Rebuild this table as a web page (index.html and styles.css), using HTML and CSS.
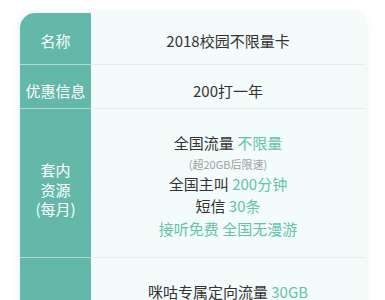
FILE: index.html
```html
<!DOCTYPE html>
<html lang="zh-CN">
<head>
<meta charset="utf-8">
<link rel="stylesheet" href="styles.css">
</head>
<body>
<div class="card">
  <div class="row r1">
    <div class="label">名称</div>
    <div class="value">2018校园不限量卡</div>
  </div>
  <div class="row r2">
    <div class="label">优惠信息</div>
    <div class="value">200打一年</div>
  </div>
  <div class="row r3">
    <div class="label multi">套内<br>资源<br>(每月)</div>
    <div class="value list">
      <div class="line l1">全国流量 <span class="hl">不限量</span></div>
      <div class="line note">(超20GB后限速)</div>
      <div class="line l3">全国主叫 <span class="hl">200分钟</span></div>
      <div class="line l4">短信 <span class="hl">30条</span></div>
      <div class="line l5 hl">接听免费 全国无漫游</div>
    </div>
  </div>
  <div class="row r4">
    <div class="label"></div>
    <div class="value list">
      <div class="line l1">咪咕专属定向流量 <span class="hl">30GB</span></div>
    </div>
  </div>
</div>
</body>
</html>
```

FILE: styles.css
```css
* { box-sizing: border-box; }
html, body {
  margin: 0;
  padding: 0;
  background: #ffffff;
}
body {
  font-family: "Noto Sans CJK SC", "Noto Sans", sans-serif;
  color: #333333;
  overflow: hidden;
}
.card {
  margin: 13px 0 0 20px;
  width: 345px;
  border-radius: 15px 12px 0 0;
  overflow: hidden;
  box-shadow: 0 0 8px rgba(120, 150, 150, 0.18);
}
.row {
  display: grid;
  grid-template-columns: 71px 1fr;
}
.label {
  background: #63b8a9;
  color: #ffffff;
  font-size: 15px;
  line-height: 20px;
  display: flex;
  align-items: center;
  justify-content: center;
  text-align: center;
  border-bottom: 1px solid #a9ddd4;
}
.value {
  background: #f3fbfb;
  font-size: 15px;
  line-height: 20px;
  display: flex;
  align-items: center;
  justify-content: center;
  text-align: center;
  border-bottom: 1px solid #e3eeee;
}
.r1 { height: 52px; }
.r1 .label, .r1 .value { padding-top: 5px; }
.r2 { height: 44px; }
.r2 .label, .r2 .value { padding-top: 9px; }
.r3 { height: 149px; }
.r3 .label { padding-top: 13px; line-height: 19.5px; }
.r4 { height: 80px; }
.r4 .label, .r4 .value { border-bottom: none; }
.list {
  display: block;
  padding-top: 23px;
}
.line { line-height: 22px; }
.note {
  font-size: 11px;
  line-height: 20px;
  color: #a0a0a0;
}
.l3 { line-height: 20px; }
.l4 { line-height: 24px; }
.hl { color: #66c2ad; }
```
